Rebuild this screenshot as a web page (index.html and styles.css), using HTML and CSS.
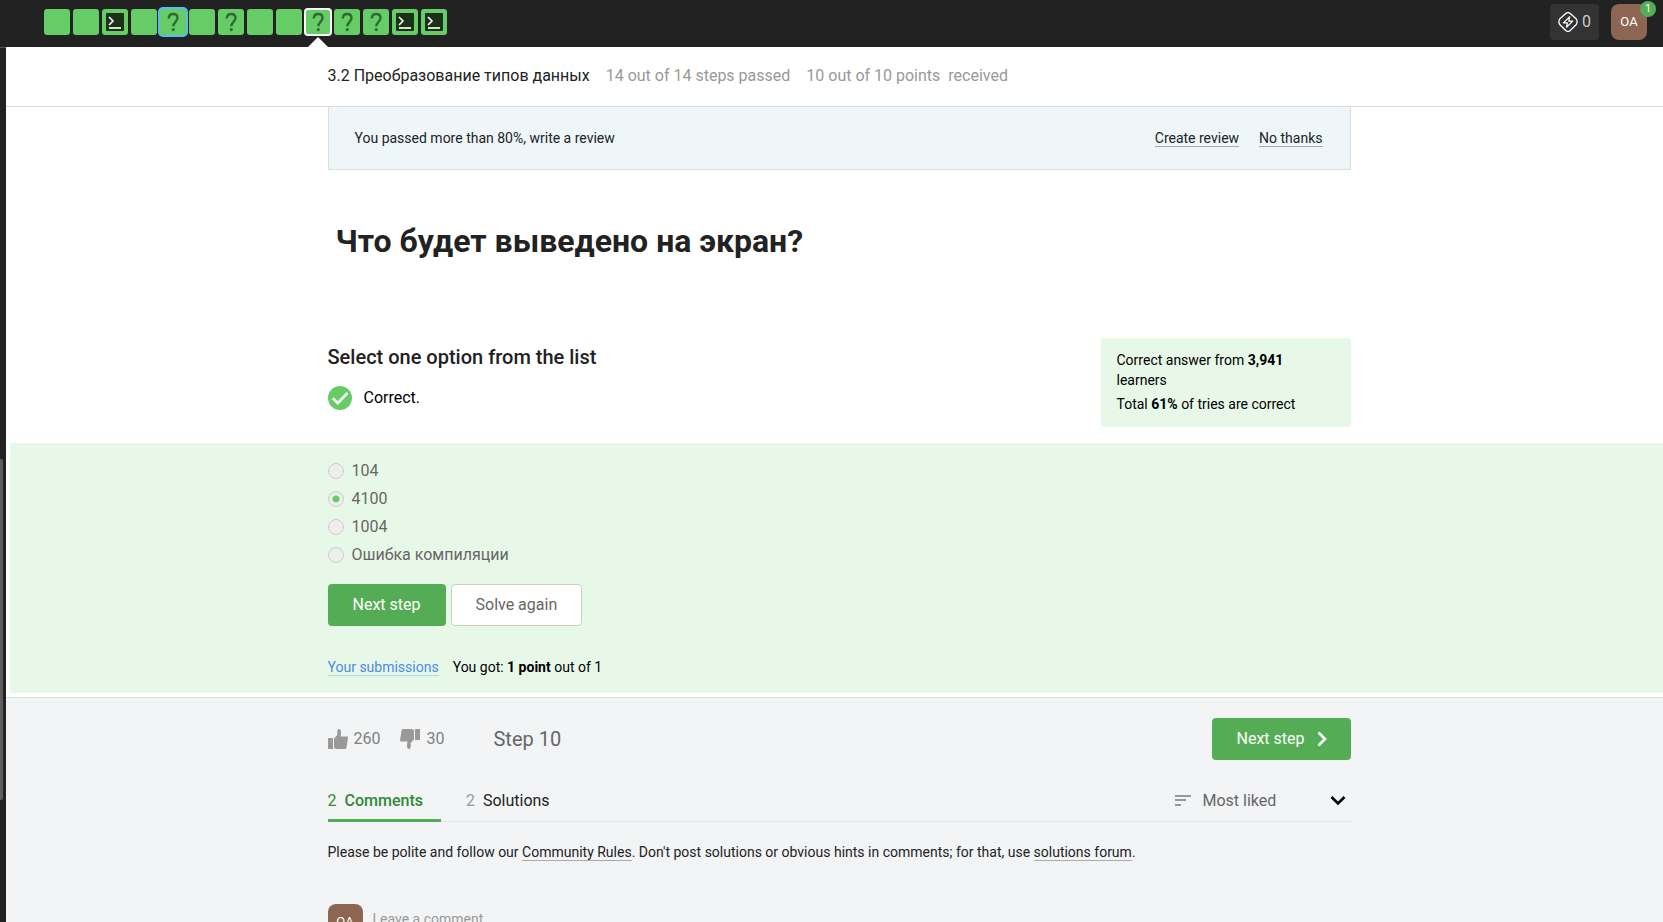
FILE: index.html
```html
<!DOCTYPE html>
<html lang="en">
<head>
<meta charset="utf-8">
<meta name="viewport" content="width=device-width, initial-scale=1">
<title>3.2 Преобразование типов данных</title>
<link rel="stylesheet" href="styles.css">
</head>
<body>
<svg class="sprite" aria-hidden="true">
  <symbol id="code" viewBox="0 0 26 26">
    <rect x="4" y="4" width="18" height="18" rx="1" fill="#1b3219"/>
    <path d="M7 8l4 4-4 4" fill="none" stroke="#fff" stroke-width="1.6"/>
    <path d="M7 19h12" stroke="#d5ddd5" stroke-width="2"/>
  </symbol>
  <symbol id="quiz" viewBox="0 0 26 26">
    <path d="M8.800 9.600C8.800 6.700 10.500 5 13.200 5s4.300 1.600 4.300 4.100c0 3.600-4.200 4-4.200 8.200" fill="none" stroke="#2f6b30" stroke-width="2.400"/>
    <circle cx="13.300" cy="20.600" r="1.600" fill="#2f6b30"/>
  </symbol>
  <symbol id="thumb" viewBox="0 0 20 20">
    <path d="M0 9.500Q0 9 .5 9H4.500Q5 9 5 9.500V19.500Q5 20 4.500 20H.8Q0 20 0 19zM6 9.500L9.300 6V1.800Q9.300 0 11 0q2 0 2 3.500 0 2-.6 4H19q1.200 0 1 1.300l-1.500 9.700Q18.300 20 17 20H9q-1.500 0-3-1z" fill="#999"/>
  </symbol>
</svg>
<header class="topbar">
  <nav class="steps" aria-label="Lesson steps">
    <a class="step" href="#s1" aria-label="Step 1"></a>
    <a class="step" href="#s2" aria-label="Step 2"></a>
    <a class="step" href="#s3" aria-label="Step 3"><svg><use href="#code"/></svg></a>
    <a class="step" href="#s4" aria-label="Step 4"></a>
    <a class="step step-marked" href="#s5" aria-label="Step 5"><svg><use href="#quiz"/></svg></a>
    <a class="step" href="#s6" aria-label="Step 6"></a>
    <a class="step" href="#s7" aria-label="Step 7"><svg><use href="#quiz"/></svg></a>
    <a class="step" href="#s8" aria-label="Step 8"></a>
    <a class="step" href="#s9" aria-label="Step 9"></a>
    <a class="step step-current" href="#s10" aria-label="Step 10" aria-current="step"><svg><use href="#quiz"/></svg></a>
    <a class="step" href="#s11" aria-label="Step 11"><svg><use href="#quiz"/></svg></a>
    <a class="step" href="#s12" aria-label="Step 12"><svg><use href="#quiz"/></svg></a>
    <a class="step" href="#s13" aria-label="Step 13"><svg><use href="#code"/></svg></a>
    <a class="step" href="#s14" aria-label="Step 14"><svg><use href="#code"/></svg></a>
  </nav>
  <div class="account">
    <button class="energy" type="button">
      <svg width="20" height="20" viewBox="0 0 20 20" fill="none" stroke="#fff" stroke-width="1.300" stroke-linejoin="round"><path d="M8 1.200q2-1.200 4 0L18.300 7q1.600 2.500 0 5.500L12 18.800q-2 1.200-4 0L1.700 12.500Q.2 10 1.700 7z"/><path d="M11.700 4.800L5.400 10.900h4L8.500 15.200l6.200-6.100h-4z" stroke-width="1.200"/></svg>
      <span>0</span>
    </button>
    <button class="profile" type="button">OA<span class="badge">1</span></button>
  </div>
</header>
<div class="shell">
  <aside class="sidebar"><div class="thumb"></div></aside>
  <main class="main">
    <div class="lesson">
      <div class="column lesson-row">
        <span class="lesson-title">3.2 Преобразование типов данных</span>
        <span>14 out of 14 steps passed</span>
        <span class="points">10 out of 10 points  received</span>
      </div>
    </div>
    <div class="column">
      <section class="review">
        <p>You passed more than 80%, write a review</p>
        <a class="link" href="#review">Create review</a>
        <a class="link" href="#dismiss">No thanks</a>
      </section>
      <h1>Что будет выведено на экран?</h1>
      <section class="task">
        <div>
          <h2>Select one option from the list</h2>
          <p class="verdict">
            <svg width="24" height="24" viewBox="0 0 24 24"><circle cx="12" cy="12" r="12" fill="#66cc66"/><path d="M4.700 12.300l5 4.900L19.500 7" fill="none" stroke="#fff" stroke-width="2.600"/></svg>
            Correct.
          </p>
        </div>
        <div class="stats">
          <p>Correct answer from <b>3,941</b> learners</p>
          <p>Total <b>61%</b> of tries are correct</p>
        </div>
      </section>
    </div>
    <form class="answer">
      <div class="column">
        <div class="options">
          <label><input type="radio" name="answer">104</label>
          <label><input type="radio" name="answer" checked>4100</label>
          <label><input type="radio" name="answer">1004</label>
          <label><input type="radio" name="answer">Ошибка компиляции</label>
        </div>
        <div class="actions">
          <button class="btn btn-primary" type="button">Next step</button>
          <button class="btn btn-plain" type="button">Solve again</button>
        </div>
        <p class="result"><a class="link link-blue" href="#submissions">Your submissions</a><span>You got: <b>1 point</b> out of 1</span></p>
      </div>
    </form>
    <footer class="below">
      <div class="column">
        <div class="step-footer">
          <button class="vote" type="button" aria-label="Like"><svg width="20" height="20"><use href="#thumb"/></svg>260</button>
          <button class="vote vote-down" type="button" aria-label="Dislike"><svg width="20" height="20"><use href="#thumb"/></svg>30</button>
          <span class="step-name">Step 10</span>
          <button class="btn btn-primary btn-next" type="button">Next step<svg width="10" height="16" viewBox="0 0 10 16"><path d="M1.500 1.500L8 8l-6.500 6.500" fill="none" stroke="#fff" stroke-width="2.600"/></svg></button>
        </div>
        <div class="tabs">
          <a class="tab tab-active" href="#comments"><span class="count">2</span>Comments</a>
          <a class="tab" href="#solutions"><span class="count">2</span>Solutions</a>
          <label class="sort">
            <svg width="16" height="12" viewBox="0 0 16 12" fill="#999"><path d="M0 0h16v2H0zM0 4h11v2H0zM0 9h6v2H0z"/></svg>
            <select aria-label="Sort comments"><option>Most liked</option><option>Most recent</option></select>
            <svg width="16" height="12" viewBox="0 0 16 12"><path d="M1.500 2L8 8.500 14.500 2" fill="none" stroke="#000" stroke-width="2.600"/></svg>
          </label>
        </div>
        <p class="rules">Please be polite and follow our <a class="link" href="#rules">Community Rules</a>. Don't post solutions or obvious hints in comments; for that, use <a class="link" href="#forum">solutions forum</a>.</p>
        <div class="compose">
          <span class="avatar">OA</span>
          <input type="text" placeholder="Leave a comment" aria-label="Leave a comment">
        </div>
      </div>
    </footer>
  </main>
</div>
</body>
</html>
```

FILE: styles.css
```css
* { box-sizing: border-box; }
body {
  margin: 0;
  height: 100vh;
  display: flex;
  flex-direction: column;
  overflow: hidden;
  background: #fff;
  color: #222;
  font: 16px/24px Roboto, "Noto Sans", sans-serif;
}
h1, h2, p { margin: 0; }
button, input, select { font: inherit; }
button { border: 0; padding: 0; cursor: pointer; }
svg { display: block; flex: none; }
.sprite { position: absolute; width: 0; height: 0; }

.topbar {
  flex: none;
  display: flex;
  justify-content: space-between;
  height: 47px;
  padding: 4px 16px 0 44px;
  background: #222;
}
.steps { display: flex; gap: 3px; padding-top: 5px; }
.step {
  position: relative;
  width: 26px;
  height: 26px;
  border-radius: 3px;
  background: #66cc66;
}
.step svg { width: 26px; height: 26px; }
.step-marked { z-index: 1; box-shadow: 0 0 0 2px #5bb9f5; }
.step-current { outline: 2px solid #fff; outline-offset: -1px; }
.step-current::after {
  content: "";
  position: absolute;
  top: 28px;
  left: 3px;
  border: 10px solid transparent;
  border-top: 0;
  border-bottom-color: #fff;
}
.account { display: flex; gap: 12px; }
.energy {
  display: flex;
  align-items: center;
  gap: 4px;
  height: 36px;
  padding: 0 8px;
  border-radius: 4px;
  background: #333;
  color: #ccc;
}
.profile {
  position: relative;
  width: 36px;
  height: 36px;
  border-radius: 8px;
  background: #8c6652;
  color: #fff;
  font-size: 13px;
}
.badge {
  position: absolute;
  top: -3px;
  right: -9px;
  width: 16px;
  height: 16px;
  border-radius: 50%;
  background: #54ad54;
  font-size: 11px;
  line-height: 16px;
}

.shell { flex: 1; display: flex; min-height: 0; }
.sidebar {
  position: relative;
  width: 6px;
  background: #222;
  border-top: 1px solid #555;
}
.thumb {
  position: absolute;
  top: 47%;
  left: 0;
  width: 3px;
  height: 39%;
  border-radius: 0 2px 2px 0;
  background: #5e5e5e;
}
.main { flex: 1; min-width: 0; overflow: hidden; }
.column { max-width: 1023px; margin: 0 auto; }
.main > .column, .lesson, .below { padding-left: 9px; }
.main > .column { max-width: 1032px; }

.lesson { border-bottom: 1px solid #dcdcdc; color: #999; }
.lesson-row { display: flex; gap: 16px; padding: 17px 0 18px; }
.lesson-title { color: #222; }
.points { white-space: pre; }

.review {
  display: flex;
  align-items: center;
  gap: 20px;
  padding: 19px 27px 19px 26px;
  border: 1px solid #dcdcdc;
  border-top: 0;
  background: #eef6fa;
  font-size: 14px;
}
.review p { flex: 1; }
.link { color: inherit; text-decoration: none; line-height: 16px; border-bottom: 1px solid #aaa; }
.link-blue { color: #4a8be8; border-color: #b3d9e6; }

h1 { padding: 51px 8px 77px; font-size: 32px; line-height: 40px; font-weight: 700; }
.task { display: flex; justify-content: space-between; padding-bottom: 16px; color: #000; }
h2 { padding-top: 7px; color: #222; font-size: 20px; line-height: 24px; font-weight: 500; }
.verdict { display: flex; align-items: center; gap: 12px; padding-top: 17px; }
.stats {
  display: grid;
  gap: 4px;
  width: 250px;
  padding: 12px 16px 13px;
  border-radius: 4px;
  background: #e8f8e8;
  font-size: 14px;
  line-height: 20px;
}

.answer { margin: 0 0 4px 4px; padding: 14px 0 14px 5px; background: #e8f8e8; }
.options { display: grid; color: #666; }
.options label { display: flex; align-items: center; gap: 8px; height: 28px; }
.options input {
  appearance: none;
  width: 16px;
  height: 16px;
  margin: 0;
  border: 1px solid #ccc;
  border-radius: 50%;
  background: #eee;
}
.options input:checked { background: radial-gradient(circle, #66cc66 3px, #eee 4px); }
.actions { display: flex; gap: 5px; padding: 15px 0 29px; }
.btn { height: 42px; padding: 0 25px; border-radius: 4px; }
.btn-primary { background: #54ad54; color: #fff; }
.btn-plain { padding: 0 24px; border: 1px solid #ccc; background: #fff; color: #666; }
.result { display: flex; align-items: center; gap: 14px; color: #000; font-size: 14px; }

.below { min-height: 100vh; border-top: 1px solid #dcdcdc; background: #f2f4f6; }
.step-footer { display: flex; align-items: center; padding-top: 20px; }
.vote { display: flex; align-items: center; gap: 6px; margin-right: 20px; background: none; color: #808080; }
.vote-down svg { transform: rotate(180deg); }
.step-name { margin-left: 29px; color: #666; font-size: 20px; }
.btn-next { display: flex; align-items: center; gap: 12px; margin-left: auto; padding-right: 24px; }

.tabs { display: flex; gap: 25px; margin-top: 21px; border-bottom: 1px solid #e4e6e8; }
.tab { display: flex; gap: 8px; padding: 8px 0; color: #222; text-decoration: none; }
.count { color: #999; }
.tab-active {
  margin-bottom: -1px;
  padding: 8px 18px 6px 0;
  border-bottom: 3px solid #54ad54;
  color: #2f8a33;
  font-weight: 500;
}
.tab-active .count { color: #2f8a33; font-weight: 400; }
.sort { display: flex; align-items: center; gap: 12px; margin-left: auto; padding-right: 5px; }
.sort select { appearance: none; width: 115px; padding: 0; border: 0; background: none; color: #666; }
.rules { padding-top: 18px; font-size: 14px; }
.compose { display: flex; gap: 10px; padding-top: 40px; }
.avatar {
  width: 35px;
  height: 35px;
  border-radius: 8px;
  background: #8c6652;
  color: #fff;
  font-size: 13px;
  line-height: 35px;
  text-align: center;
}
.compose input { flex: 1; height: 30px; padding: 0; border: 0; background: none; font-size: 14px; }
.compose input::placeholder { color: #999; }
```
